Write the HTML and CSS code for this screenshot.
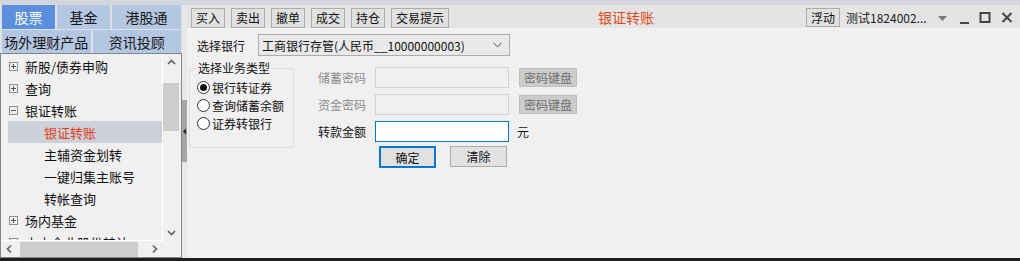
FILE: index.html
```html
<!DOCTYPE html>
<html lang="zh-CN">
<head>
<meta charset="utf-8">
<title>银证转账</title>
<link rel="stylesheet" href="styles.css">
</head>
<body>
<div class="app">
  <div class="main">
    <aside class="left">
      <div class="tabs tabs1">
        <div class="tab active">股票</div>
        <div class="tab">基金</div>
        <div class="tab">港股通</div>
      </div>
      <div class="tabs tabs2">
        <div class="tab">场外理财产品</div>
        <div class="tab">资讯投顾</div>
      </div>
      <div class="treebox">
        <div class="treerow">
          <div class="tree">
            <div class="node"><svg class="exp" width="9" height="9" viewBox="0 0 9 9"><rect x="0.5" y="0.5" width="8" height="8" fill="none" stroke="#8e8e8e"/><path d="M2 4.5h5M4.5 2v5" stroke="#555"/></svg>新股/债券申购</div>
            <div class="node"><svg class="exp" width="9" height="9" viewBox="0 0 9 9"><rect x="0.5" y="0.5" width="8" height="8" fill="none" stroke="#8e8e8e"/><path d="M2 4.5h5M4.5 2v5" stroke="#555"/></svg>查询</div>
            <div class="node"><svg class="exp" width="9" height="9" viewBox="0 0 9 9"><rect x="0.5" y="0.5" width="8" height="8" fill="none" stroke="#8e8e8e"/><path d="M2 4.5h5" stroke="#555"/></svg>银证转账</div>
            <div class="node child selected">银证转账</div>
            <div class="node child">主辅资金划转</div>
            <div class="node child">一键归集主账号</div>
            <div class="node child">转帐查询</div>
            <div class="node"><svg class="exp" width="9" height="9" viewBox="0 0 9 9"><rect x="0.5" y="0.5" width="8" height="8" fill="none" stroke="#8e8e8e"/><path d="M2 4.5h5M4.5 2v5" stroke="#555"/></svg>场内基金</div>
            <div class="node"><svg class="exp" width="9" height="9" viewBox="0 0 9 9"><rect x="0.5" y="0.5" width="8" height="8" fill="none" stroke="#8e8e8e"/><path d="M2 4.5h5M4.5 2v5" stroke="#555"/></svg>中小企业股份转让</div>
          </div>
          <div class="vscroll">
            <svg class="arrow" width="17" height="17" viewBox="0 0 17 17"><path d="M5 10l3.5-3.5L12 10" fill="none" stroke="#606060" stroke-width="1.6"/></svg>
            <div class="vtrack"><div class="vthumb"></div></div>
            <svg class="arrow" width="17" height="17" viewBox="0 0 17 17"><path d="M5 7l3.5 3.5L12 7" fill="none" stroke="#606060" stroke-width="1.6"/></svg>
          </div>
        </div>
        <div class="hrow">
          <div class="hscroll">
            <svg class="arrow" width="17" height="16" viewBox="0 0 17 16"><path d="M10 4.5L6.5 8l3.5 3.5" fill="none" stroke="#606060" stroke-width="1.6"/></svg>
            <div class="htrack"><div class="hthumb"></div></div>
            <svg class="arrow" width="17" height="16" viewBox="0 0 17 16"><path d="M7 4.5L10.5 8 7 11.5" fill="none" stroke="#606060" stroke-width="1.6"/></svg>
          </div>
          <div class="corner"></div>
        </div>
      </div>
    </aside>
    <div class="splitter">
      <div class="grip"><svg width="5" height="7" viewBox="0 0 5 7"><path d="M4 0.5L1 3.5 4 6.5z" fill="#222"/></svg></div>
    </div>
    <section class="right">
      <div class="toolbar">
        <button class="tbtn">买入</button>
        <button class="tbtn">卖出</button>
        <button class="tbtn">撤单</button>
        <button class="tbtn">成交</button>
        <button class="tbtn">持仓</button>
        <button class="tbtn wide">交易提示</button>
        <div class="title">银证转账</div>
        <div class="winbar">
          <button class="tbtn float">浮动</button>
          <div class="account">测试1824002...</div>
          <svg class="ddarrow" width="9" height="6" viewBox="0 0 9 6"><path d="M0 0h9L4.5 5z" fill="#7a7a7a"/></svg>
          <svg class="winctl min" width="12" height="14" viewBox="0 0 12 14"><path d="M1 12h9" stroke="#444" stroke-width="2"/></svg>
          <svg class="winctl max" width="12" height="14" viewBox="0 0 12 14"><rect x="1.5" y="2" width="9" height="9" fill="none" stroke="#444" stroke-width="2"/></svg>
          <svg class="winctl close" width="12" height="14" viewBox="0 0 12 14"><path d="M1.5 2l9 9M10.5 2l-9 9" stroke="#444" stroke-width="2"/></svg>
        </div>
      </div>
      <div class="content">
        <div class="bankrow">
          <span class="lbl-bank">选择银行</span>
          <div class="select">
            <span>工商银行存管(人民币__10000000003)</span>
            <svg width="9" height="6" viewBox="0 0 9 6"><path d="M0.5 0.8L4.5 4.8 8.5 0.8" fill="none" stroke="#444" stroke-width="1"/></svg>
          </div>
        </div>
        <div class="body">
          <fieldset class="group">
            <legend>选择业务类型</legend>
            <label class="radio"><span class="dot checked"></span>银行转证券</label>
            <label class="radio"><span class="dot"></span>查询储蓄余额</label>
            <label class="radio"><span class="dot"></span>证券转银行</label>
          </fieldset>
          <div class="fields">
            <div class="grid">
              <span class="flbl disabled">储蓄密码</span>
              <div class="input off"></div>
              <button class="kbtn">密码键盘</button>
              <span class="flbl disabled">资金密码</span>
              <div class="input off"></div>
              <button class="kbtn">密码键盘</button>
              <span class="flbl">转款金额</span>
              <div class="input on"></div>
              <span class="unit">元</span>
            </div>
            <div class="actions">
              <button class="abtn primary">确定</button>
              <button class="abtn">清除</button>
            </div>
          </div>
        </div>
      </div>
    </section>
  </div>
  <div class="status"></div>
</div>
</body>
</html>
```
FILE: styles.css
```css
* { box-sizing: border-box; margin: 0; padding: 0; }
body {
  width: 1020px; height: 261px; overflow: hidden;
  background: #f0f0f0;
  font-family: "Noto Sans CJK SC", "Microsoft YaHei", sans-serif;
  color: #111;
}
button { font-family: inherit; }
.app { display: flex; flex-direction: column; height: 261px; }
.main { display: flex; height: 258px; background: #d3d6dc; padding-top: 5px; }
.status { height: 3px; background: #1e1e1e; }

/* left panel */
.left { width: 182px; display: flex; flex-direction: column; background: #dde2e9; }
.tabs { display: flex; gap: 2px; padding: 0 1px 0 2px; }
.tabs1 { height: 24px; margin-bottom: 1px; }
.tabs2 { height: 23px; }
.tab {
  background: #b3c6e2; font-size: 14px; line-height: 1;
  display: flex; align-items: center; justify-content: center; color: #151515;
}
.tab.active { background: #5b8fdc; color: #fff; }
.tabs1 .tab { width: 53px; }
.tabs1 .tab:nth-child(3) { flex: 1; }
.tabs2 .tab { flex: 1; }
.treebox { flex: 1; border: 1px solid #82868e; background: #f0f0f0; display: flex; flex-direction: column; }
.treerow { display: flex; height: 187px; }
.tree {
  width: 162px; height: 187px; overflow: hidden;
  border-right: 1px solid #fff; border-bottom: 1px solid #fff;
  padding-top: 1px;
}
.node {
  height: 22px; display: flex; align-items: center;
  font-size: 13px; padding-left: 8px; white-space: nowrap; color: #111;
}
.exp { margin-right: 7px; flex: none; }
.node.child { padding-left: 43px; }
.node.selected { background: #cdd1da; color: #e2401a; margin-left: 7px; padding-left: 36px; }
.vscroll { width: 18px; display: flex; flex-direction: column; background: #f0f0f0; }
.vtrack { flex: 1; }
.vthumb { margin: 12px 2px 0 0; height: 48px; background: #cdcdcd; }
.hrow { display: flex; height: 16px; }
.hscroll { width: 162px; display: flex; align-items: center; }
.htrack { flex: 1; height: 15px; display: flex; }
.hthumb { margin-left: 2px; width: 118px; background: #cdcdcd; }
.corner { flex: 1; background: #f0f0f0; }
.arrow { display: block; flex: none; }

/* splitter */
.splitter { width: 5px; background: #e6e8ec; padding-top: 95px; }
.grip { height: 62px; background: #a6a6a6; display: flex; align-items: center; justify-content: center; }

/* right */
.right { flex: 1; display: flex; flex-direction: column; }
.toolbar {
  height: 24px; background: #e4e4e4; display: flex; align-items: flex-start;
  padding: 3px 0 0 4px; gap: 6px; border-bottom: 1px solid #f4f4f4;
}
.tbtn {
  height: 20px; width: 34px; font-size: 12px; line-height: 18px;
  background: #e1e1e1; border: 1px solid #adadad; color: #111;
}
.tbtn.wide { width: 58px; }
.title { margin-left: 143px; font-size: 14px; line-height: 19px; color: #e24a16; }
.winbar { margin-left: auto; display: flex; align-items: flex-start; padding-right: 7px; }
.tbtn.float { height: 19px; line-height: 17px; }
.account { font-size: 12px; line-height: 19px; color: #222; margin-left: 6px; width: 90px; white-space: nowrap; }
.ddarrow { margin: 8px 0 0 2px; }
.winctl { margin-top: 3px; }
.winctl.min { margin-left: 12px; }
.winctl.max { margin-left: 8px; }
.winctl.close { margin-left: 10px; }
.content { flex: 1; background: #f0f0f0; padding: 5px 0 0 2px; }
.bankrow { display: flex; align-items: center; height: 22px; }
.lbl-bank { font-size: 12px; width: 69px; padding-left: 8px; }
.select {
  width: 252px; height: 22px; background: #e9e9e9; border: 1px solid #acacac;
  display: flex; align-items: center; justify-content: space-between;
  padding: 0 7px 0 3px; font-size: 12px; color: #111;
}
.body { display: flex; margin-top: 4px; }
.group {
  width: 105px; height: 87px; border: 1px solid #dcdcdc; border-radius: 2px;
  padding: 0 0 0 7px; margin-top: 1px;
}
.group legend { font-size: 12px; padding: 0 1px; line-height: 14px; }
.radio { display: flex; align-items: center; height: 18px; font-size: 12px; }
.radio:first-of-type { margin-top: 3px; }
.dot {
  width: 13px; height: 13px; border-radius: 50%; border: 1px solid #333;
  background: #fff; margin-right: 2px; display: flex; align-items: center; justify-content: center;
}
.dot.checked::after { content: ""; width: 7px; height: 7px; border-radius: 50%; background: #111; }
.fields { margin-left: 24px; padding-top: 7px; }
.grid { display: grid; grid-template-columns: 57px 134px auto; row-gap: 6px; align-items: center; }
.flbl { font-size: 12px; }
.flbl.disabled { color: #8d8d8d; }
.input { height: 21px; }
.input.off { background: #f0f0f0; border: 1px solid #d2d2d2; }
.input.on { background: #fff; border: 1px solid #0078d7; }
.kbtn {
  margin-left: 10px; width: 58px; height: 19px; background: #cccccc; border: 1px solid #bfbfbf;
  font-size: 12px; line-height: 17px; color: #6f6f6f;
}
.unit { margin-left: 8px; font-size: 12px; }
.actions { display: flex; gap: 14px; margin: 4px 0 0 61px; }
.abtn { width: 57px; height: 21px; background: #e1e1e1; border: 1px solid #adadad; font-size: 12px; line-height: 19px; color: #111; }
.abtn.primary { border: 2px solid #0078d7; line-height: 17px; height: 22px; }
```
